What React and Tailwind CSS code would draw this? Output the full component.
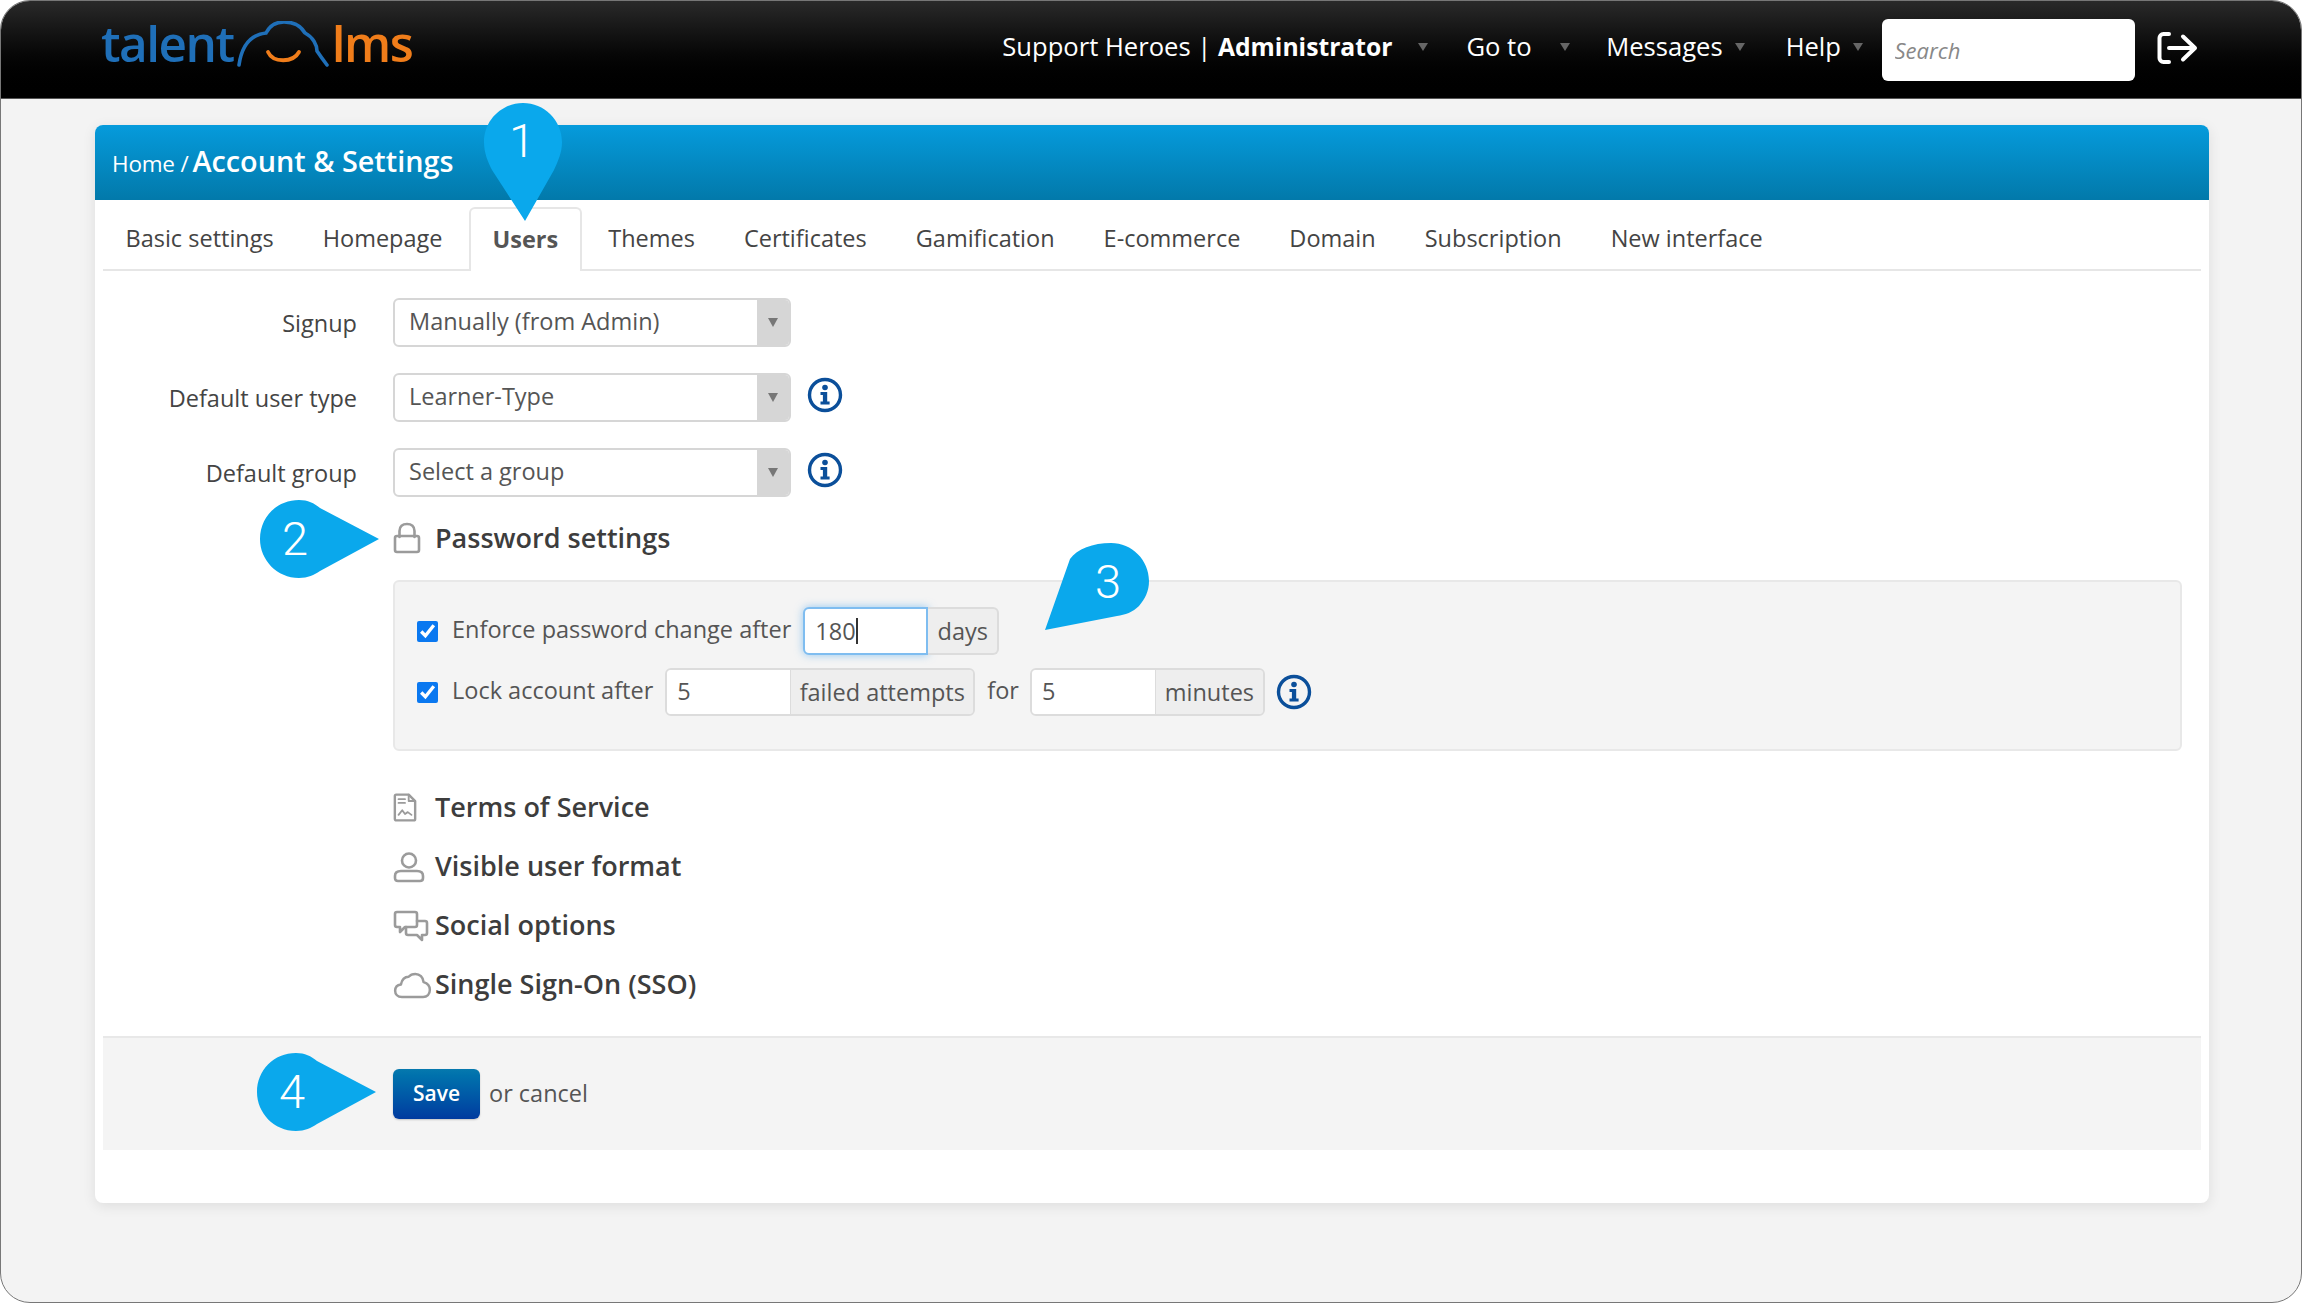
import React from "react";

const font = { fontFamily: '"Open Sans", sans-serif' };

function Caret() {
  return <span className="block w-0 h-0 border-x-[5px] border-x-transparent border-t-[8px] border-t-[#666]" />;
}

function Info({ className }) {
  return (
    <svg viewBox="0 0 36 36" className={"w-[36px] h-[36px] shrink-0 " + (className || "")}>
      <circle cx="18" cy="18" r="15.5" fill="none" stroke="#0b4f9a" strokeWidth="3.4" />
      <circle cx="18" cy="10.5" r="2.8" fill="#0b4f9a" />
      <path d="M13.5 15h6.7v9.6h2.4v2.9h-9.1v-2.9h2.4v-6.7h-2.4z" fill="#0b4f9a" />
    </svg>
  );
}

function Callout({ n, className, w, h, d, tx, ty }) {
  return (
    <div className={"absolute " + className} style={{ width: w, height: h }}>
      <svg viewBox={`0 0 ${w} ${h}`} className="w-full h-full block">
        <path d={d} fill="#0aa8ec" />
      </svg>
      <span
        className="absolute text-white text-[47px] leading-none font-light -translate-x-1/2 -translate-y-1/2"
        style={{ left: tx, top: ty, fontFamily: "Roboto, sans-serif" }}
      >
        {n}
      </span>
    </div>
  );
}

function SelectRow({ label, value, info }) {
  return (
    <div className="flex items-center h-[49px] mb-[26px]">
      <div className="w-[262px] text-right text-[23.5px] text-[#444] pt-[2px]">{label}</div>
      <div className="ml-[36px] w-[398px] h-[49px] flex rounded-[6px] border-2 border-[#d6d6d6] bg-white overflow-hidden">
        <div className="flex-1 pl-[14px] text-[23.5px] leading-[43px] text-[#555]">{value}</div>
        <div className="w-[32px] bg-[#d6d6d6] flex items-center justify-center">
          <span className="w-0 h-0 border-x-[5px] border-x-transparent border-t-[9px] border-t-[#777]" />
        </div>
      </div>
      {info && <Info className="ml-[16px] -mt-[5px]" />}
    </div>
  );
}

function Addon({ value, unit, inputW, unitW }) {
  return (
    <div className="flex h-[48px] rounded-[6px] border-2 border-[#dcdcdc] overflow-hidden text-[23.5px]">
      <div className="bg-white pl-[10px] leading-[42px] text-[#555]" style={{ width: inputW }}>{value}</div>
      <div className="bg-[#eeeeee] border-l border-[#dcdcdc] text-center leading-[44px] text-[#555]" style={{ width: unitW }}>{unit}</div>
    </div>
  );
}

function Section({ icon, title }) {
  return (
    <div className="flex items-center h-[59px]">
      <div className="w-[42px] shrink-0 flex items-center">{icon}</div>
      <div className="text-[27px] font-semibold text-[#3d3d3d]">{title}</div>
    </div>
  );
}

const gray = { fill: "none", stroke: "#9b9b9b", strokeWidth: 2.6, strokeLinejoin: "round", strokeLinecap: "round" };

export default function App() {
  const tabs = ["Basic settings", "Homepage", "Users", "Themes", "Certificates", "Gamification", "E-commerce", "Domain", "Subscription", "New interface"];
  return (
    <div className="w-[2302px] h-[1303px] bg-white overflow-hidden" style={font}>
      <div className="relative w-full h-full rounded-[30px] border border-[#777] bg-[#f3f3f3] overflow-hidden">
        <header className="h-[98px] flex items-center bg-gradient-to-b from-[#2a2a2a] to-[#000] border-b border-[#555]">
          <div className="ml-[100px] flex items-end h-[62px] -mt-[25px] text-[49.5px] font-semibold leading-none">
            <span className="text-[#1f6fb8] tracking-[-1.5px]">talent</span>
            <svg viewBox="0 0 92 46" className="w-[92px] h-[46px] ml-[3px] mb-[1px] shrink-0">
              <path d="M2 44C4 30 10 14 29 12C33 4 40 1 47 1C56 1 64 5 68 12C76 16 80 24 80 30C84 36 87 40 90 44" fill="none" stroke="#1f6fb8" strokeWidth="3.6" strokeLinecap="round" />
              <path d="M31 31C36 42 56 42 62 31" fill="none" stroke="#f07d1a" strokeWidth="3.8" strokeLinecap="round" />
            </svg>
            <span className="text-[#f07d1a] tracking-[-1.5px] ml-[3px]">lms</span>
          </div>
          <nav className="ml-auto flex items-center text-[25.6px] text-white -mt-[5px]">
            <span>Support Heroes | <b className="font-bold text-[24.7px]">Administrator</b></span>
            <span className="ml-[26px]"><Caret /></span>
            <span className="ml-[38px]">Go to</span>
            <span className="ml-[28px]"><Caret /></span>
            <span className="ml-[36.5px]">Messages</span>
            <span className="ml-[12.5px]"><Caret /></span>
            <span className="ml-[40.5px]">Help</span>
            <span className="ml-[11.5px]"><Caret /></span>
            <input
              placeholder="Search"
              className="ml-[19px] w-[253px] h-[62px] mt-[5px] rounded-[6px] bg-white pl-[13px] text-[22px] italic placeholder:text-[#888] outline-none"
            />
          </nav>
          <svg viewBox="0 0 42 34" className="w-[42px] h-[34px] ml-[22px] mr-[102.5px] -mt-[3px] shrink-0">
            <path d="M12 3H6.5C4 3 2.5 5 2.5 7V27C2.5 29 4 31 6.5 31H12" fill="none" stroke="#fff" strokeWidth="4" strokeLinecap="round" />
            <path d="M12 17H37M26 5.5L38 17L26 28.5" fill="none" stroke="#fff" strokeWidth="4" strokeLinecap="round" strokeLinejoin="round" />
          </svg>
        </header>

        <main className="ml-[94px] mr-[92px] mt-[26px] h-[1078px] bg-white rounded-[8px] shadow-[0_3px_14px_rgba(0,0,0,0.09)] flex flex-col">
          <div className="h-[75px] shrink-0 rounded-t-[8px] bg-gradient-to-b from-[#069bdc] to-[#0279aa] flex items-center pl-[17px] text-white">
            <span className="text-[22.5px] mt-[2px] tracking-[-0.2px]">Home / </span>
            <span className="text-[28.8px] font-semibold -mt-[3px] ml-[4px]">Account &amp; Settings</span>
          </div>

          <div className="mx-[8px] mt-[7px] h-[64px] shrink-0 flex items-stretch border-b-2 border-[#e6e6e6]">
            <div className="flex -ml-[2px]">
              {tabs.map((t) =>
                t === "Users" ? (
                  <div key={t} className="h-[64px] px-[21.5px] mx-[2px] flex items-center bg-white border-2 border-b-0 border-[#e6e6e6] rounded-t-[6px] text-[23.5px] font-bold text-[#555]">{t}</div>
                ) : (
                  <div key={t} className="px-[24.5px] pt-[2px] flex items-center text-[23.5px] text-[#444]">{t}</div>
                )
              )}
            </div>
          </div>

          <div className="flex-1 flex flex-col pt-[27px]">
            <SelectRow label="Signup" value="Manually (from Admin)" />
            <SelectRow label="Default user type" value="Learner-Type" info />
            <SelectRow label="Default group" value="Select a group" info />

            <div className="ml-[298px] -mt-[8px] flex items-center h-[46px]">
              <svg viewBox="0 0 28 32" className="w-[28px] h-[32px] shrink-0">
                <path d="M6.5 15V9C6.5 4.5 9.5 2 14 2C18.5 2 21.5 4.5 21.5 9V15" {...gray} />
                <rect x="2" y="14" width="24" height="16" rx="2" {...gray} />
              </svg>
              <div className="ml-[14px] text-[27px] font-semibold text-[#3d3d3d]">Password settings</div>
            </div>

            <div className="ml-[298px] mr-[27px] mt-[19px] h-[171px] shrink-0 rounded-[6px] border-2 border-[#e8e8e8] bg-[#f4f4f4] px-[22px] pt-[25px] text-[23.5px] text-[#555]">
              <div className="flex items-center h-[48px]">
                <input type="checkbox" checked readOnly className="w-[21px] h-[21px] accent-[#0a78f0] shrink-0" />
                <span className="ml-[14px] -mt-[3px]">Enforce password change after</span>
                <div className="ml-[12px] flex h-[48px]">
                  <div className="w-[125px] bg-white border-2 border-[#7fbdf0] rounded-l-[6px] pl-[10px] leading-[42px] shadow-[0_0_8px_rgba(82,168,236,0.6)] flex items-center">
                    180<span className="inline-block w-[2px] h-[26px] bg-[#333]" />
                  </div>
                  <div className="w-[71px] bg-[#eeeeee] border-2 border-l-0 border-[#dcdcdc] rounded-r-[6px] text-center leading-[44px]">days</div>
                </div>
              </div>
              <div className="flex items-center h-[48px] mt-[13px]">
                <input type="checkbox" checked readOnly className="w-[21px] h-[21px] accent-[#0a78f0] shrink-0" />
                <span className="ml-[14px] -mt-[3px]">Lock account after</span>
                <div className="ml-[12px]"><Addon value="5" unit="failed attempts" inputW={123} unitW={183} /></div>
                <span className="ml-[12px] -mt-[3px]">for</span>
                <div className="ml-[11px]"><Addon value="5" unit="minutes" inputW={123} unitW={108} /></div>
                <Info className="ml-[11px]" />
              </div>
            </div>

            <div className="ml-[298px] mt-[27px]">
              <Section
                title="Terms of Service"
                icon={
                  <svg viewBox="0 0 26 32" className="w-[24px] h-[31px]">
                    <path d="M2 3.5C2 2.5 2.7 2 3.5 2H17L24 9V28.5C24 29.5 23.3 30 22.5 30H3.5C2.7 30 2 29.5 2 28.5Z" {...gray} />
                    <path d="M17 2V9H24M6 7H13M6 11H13M6 24L10 19L13 23L16 21L20 24" {...gray} strokeWidth="2" />
                  </svg>
                }
              />
              <Section
                title="Visible user format"
                icon={
                  <svg viewBox="0 0 32 32" className="w-[32px] h-[32px]">
                    <circle cx="16" cy="9.5" r="7" {...gray} />
                    <path d="M8 20H24C28 20 30 22 30 25V27C30 29 29 30 27 30H5C3 30 2 29 2 27V25C2 22 4 20 8 20Z" {...gray} />
                  </svg>
                }
              />
              <Section
                title="Social options"
                icon={
                  <svg viewBox="0 0 36 32" className="w-[36px] h-[32px]">
                    <path d="M4 2H22C23.5 2 24 3 24 4V15C24 16 23.5 17 22 17H12L7 22V17H4C2.5 17 2 16 2 15V4C2 3 2.5 2 4 2Z" {...gray} />
                    <path d="M24 11H32C33.5 11 34 12 34 13V23C34 24 33.5 25 32 25H29V30L24 25H15C13.5 25 13 24 13 23V17" {...gray} />
                  </svg>
                }
              />
              <Section
                title="Single Sign-On (SSO)"
                icon={
                  <svg viewBox="0 0 40 28" className="w-[39px] h-[27px] mt-[2px]">
                    <path d="M9 26C4.5 26 2 23 2 19.5C2 16 4.5 13.5 8 13C9 8 12 5 16 5C18 2.5 21 2 23 2C27.5 2 31 5.5 31.5 10.5C35 11.5 38 14.5 38 18.5C38 23 35 26 31 26Z" {...gray} />
                  </svg>
                }
              />
            </div>

            <div className="mx-[8px] mt-[22px] h-[114px] shrink-0 bg-[#f4f4f4] border-t-2 border-[#e8e8e8] flex items-center pl-[290px]">
              <div className="w-[87px] h-[50px] -mt-[1px] rounded-[6px] bg-gradient-to-b from-[#0679ae] to-[#003a9f] flex items-center justify-center text-white text-[21px] font-semibold shadow-[0_1px_2px_rgba(0,0,0,0.2)]">Save</div>
              <span className="ml-[9px] text-[23.5px] text-[#555]">or cancel</span>
            </div>
          </div>
        </main>

        <Callout n="1" className="left-[483px] top-[102px]" w={78} h={118} d="M39 0C60 0 78 17 78 39C78 50 74 58 70 67L41 118L8 67C4 59 0 50 0 39C0 17 18 0 39 0Z" tx={38} ty={37} />
        <Callout n="2" className="left-[259px] top-[499px]" w={119} h={78} d="M39 0C48 0 54 3 60 8L119 39L60 71C54 75 48 78 39 78C17 78 0 60 0 39C0 17 17 0 39 0Z" tx={35} ty={38} />
        <Callout n="3" className="left-[1044px] top-[542px]" w={104} h={87} d="M66 0C87 0 104 17 104 38C104 48 100 56 94 63C88 69 80 72 72 73L0 87L25 16C32 6 48 0 66 0Z" tx={63} ty={38} />
        <Callout n="4" className="left-[256px] top-[1052px]" w={119} h={78} d="M39 0C48 0 54 3 60 8L119 39L60 71C54 75 48 78 39 78C17 78 0 60 0 39C0 17 17 0 39 0Z" tx={35} ty={38} />
      </div>
    </div>
  );
}
